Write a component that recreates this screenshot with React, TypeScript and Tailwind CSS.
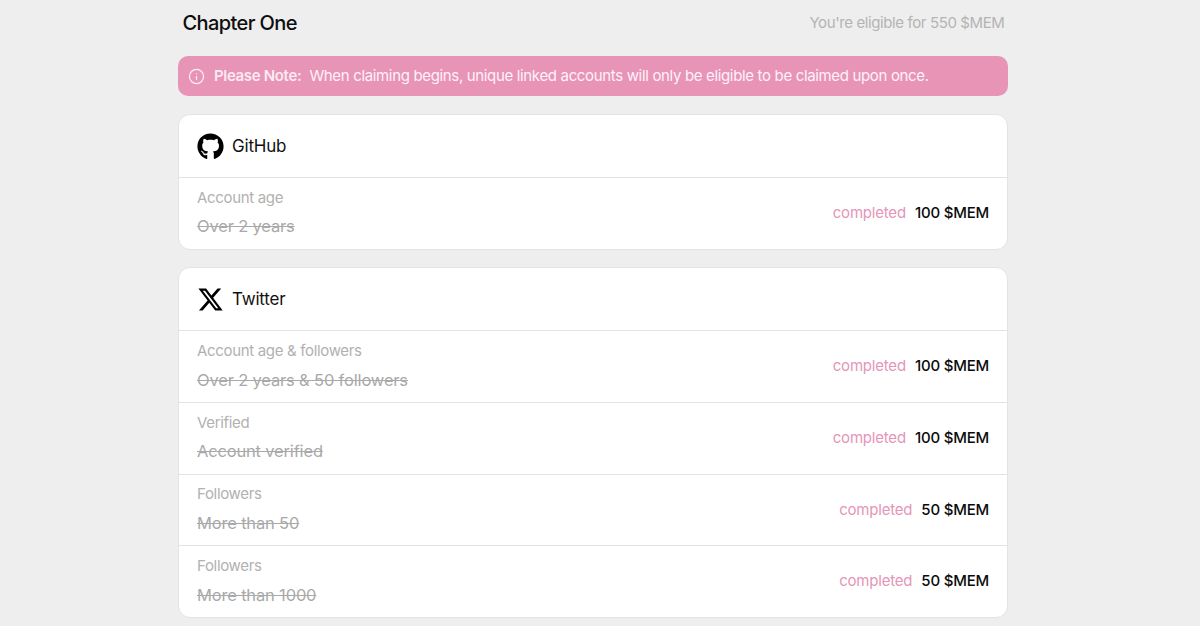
import { Info } from 'lucide-react';
import { FaGithub, FaXTwitter } from 'react-icons/fa6';
import type { ReactNode } from 'react';

type Task = { label: string; detail: string; amount: number };

const githubTasks: Task[] = [{ label: 'Account age', detail: 'Over 2 years', amount: 100 }];

const twitterTasks: Task[] = [
  { label: 'Account age & followers', detail: 'Over 2 years & 50 followers', amount: 100 },
  { label: 'Verified', detail: 'Account verified', amount: 100 },
  { label: 'Followers', detail: 'More than 50', amount: 50 },
  { label: 'Followers', detail: 'More than 1000', amount: 50 },
];

function TaskCard({ icon, title, tasks }: { icon: ReactNode; title: string; tasks: Task[] }) {
  return (
    <section className="bg-white rounded-xl border border-[#e3e3e3] overflow-hidden">
      <div className="h-[62px] pl-[18px] flex items-center gap-[8px]">
        <div className="w-[27px] h-[27px] flex items-center justify-center text-black">{icon}</div>
        <h2 className="pt-[1px] text-[17px] text-[#111] tracking-[-0.2px]">{title}</h2>
      </div>
      {tasks.map((task, i) => (
        <div key={i} className="h-[71.7px] border-t border-[#e3e3e3] px-[18px] flex items-center justify-between">
          <div className="flex flex-col gap-[8.5px] pb-[2.5px] text-[#b1b1b1] text-[15px] leading-[20px] tracking-[-0.33px]">
            <span>{task.label}</span>
            <span className="text-[#a9a9a9] text-[16.5px] tracking-[-0.17px] line-through">{task.detail}</span>
          </div>
          <div className="flex items-center gap-[9px] text-[15px]">
            <span className="text-[#e595b8] tracking-[-0.2px]">completed</span>
            <span className="text-[#0b0b0b] font-medium tracking-[-0.2px]">{task.amount} $MEM</span>
          </div>
        </div>
      ))}
    </section>
  );
}

export default function App() {
  return (
    <div className="h-[626px] overflow-hidden bg-[#eeeeee] font-['Inter',sans-serif]">
      <main className="w-[830px] ml-[178px] flex flex-col">
        <header className="h-[45px] pl-[4.5px] pr-[3.5px] flex items-center justify-between">
          <h1 className="text-[20px] font-medium text-[#0d0d0d] tracking-[-0.6px]">Chapter One</h1>
          <span className="pt-[1px] text-[15px] text-[#b4b4b4] tracking-[-0.39px]">You're eligible for 550 $MEM</span>
        </header>
        <div className="mt-[11px] h-[40px] rounded-[10px] bg-[#e894b7] pl-[10px] flex items-center text-[15px] tracking-[-0.34px]">
          <Info size={17} strokeWidth={1.75} className="text-[#fdeef4]" />
          <span className="ml-[9px] font-semibold text-[#fbeaf1]">Please Note:</span>
          <span className="ml-[8px] text-[#fdf2f7]">When claiming begins, unique linked accounts will only be eligible to be claimed upon once.</span>
        </div>
        <div className="mt-[18px] flex flex-col gap-[17.5px]">
          <TaskCard icon={<FaGithub size={27} />} title="GitHub" tasks={githubTasks} />
          <TaskCard icon={<FaXTwitter size={27} />} title="Twitter" tasks={twitterTasks} />
        </div>
      </main>
    </div>
  );
}
